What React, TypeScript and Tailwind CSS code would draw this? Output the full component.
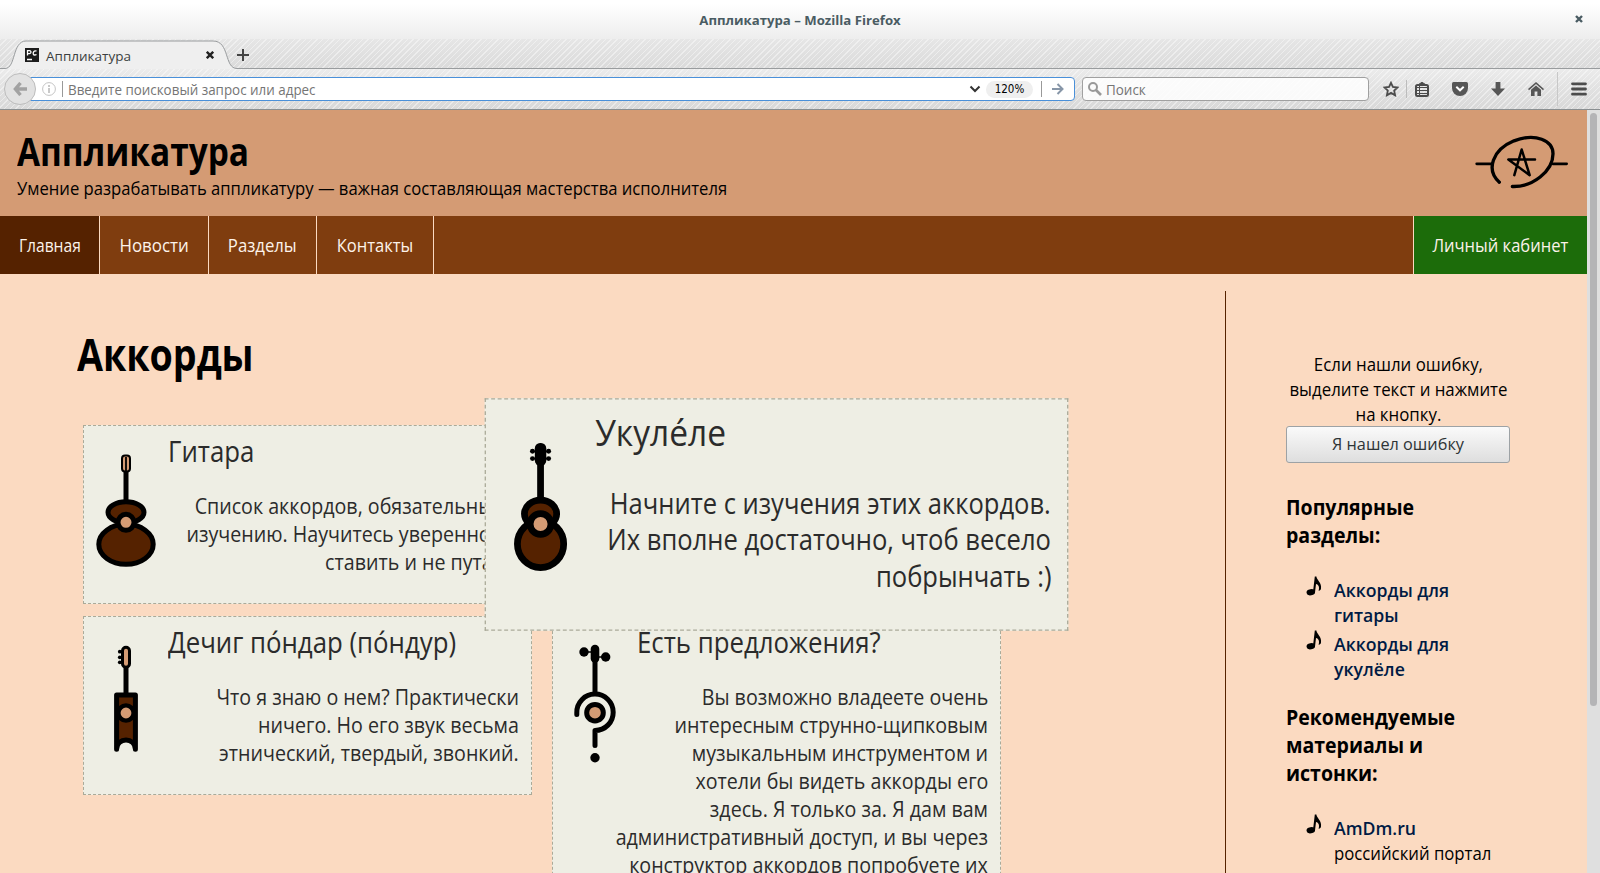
import type { ReactNode } from "react";

const BROWN = "#552200";
const TAN = "#d49b74";

function GuitarIcon() {
  return (
    <svg viewBox="0 0 84 177" className="h-[177px] w-[84px] shrink-0" stroke="#000" strokeWidth="5">
      <path d="M42 44V76" />
      <rect x="38" y="29.5" width="8" height="16" rx="3" fill={TAN} strokeWidth="2" />
      <path d="M42 31V45" strokeWidth="1.8" />
      <ellipse cx="42" cy="86.3" rx="18" ry="10.5" fill={BROWN} />
      <ellipse cx="42" cy="118.3" rx="27.2" ry="20" fill={BROWN} />
      <circle cx="42" cy="96.3" r="8" fill={TAN} />
    </svg>
  );
}

function UkuleleIcon() {
  return (
    <svg viewBox="0 0 84 177" className="h-[177px] w-[84px] shrink-0" stroke="#000" strokeWidth="5.2">
      <path d="M42 48V78" />
      <rect x="37.6" y="33.5" width="8.8" height="17.5" rx="4" stroke="none" />
      <path d="M36 39.9H48M36 45.5H48" strokeWidth="1.4" />
      <g stroke="none">
        <circle cx="35.8" cy="39.9" r="1.9" />
        <circle cx="48.2" cy="39.9" r="1.9" />
        <circle cx="35.8" cy="45.5" r="1.9" />
        <circle cx="48.2" cy="45.5" r="1.9" />
      </g>
      <ellipse cx="42" cy="88" rx="12.4" ry="10.6" fill={BROWN} />
      <ellipse cx="42" cy="111.2" rx="17.8" ry="18.1" fill={BROWN} />
      <circle cx="42" cy="95.8" r="8" fill={TAN} />
    </svg>
  );
}

function PondarIcon() {
  return (
    <svg viewBox="0 0 84 177" className="h-[177px] w-[84px] shrink-0" stroke="#000" strokeWidth="5">
      <path d="M42 50V78" />
      <rect x="38.5" y="30.2" width="7" height="20" rx="3.5" fill={TAN} strokeWidth="3" />
      <path d="M36 34.7H39M36 40.3H39M36 45.3H39" strokeWidth="1.4" />
      <g stroke="none">
        <circle cx="35.8" cy="34.7" r="1.9" />
        <circle cx="35.8" cy="40.3" r="1.9" />
        <circle cx="35.8" cy="45.3" r="1.9" />
      </g>
      <path
        d="M32.6 132.2V77.9H51.4V132.2C51.4 120 32.6 120 32.6 132.2Z"
        fill={BROWN}
        strokeLinejoin="round"
      />
      <circle cx="42" cy="96" r="7.6" fill={TAN} strokeWidth="4.4" />
    </svg>
  );
}

function QuestionIcon() {
  return (
    <svg viewBox="0 0 84 177" className="h-[177px] w-[84px] shrink-0" fill="none" stroke="#000" strokeWidth="5" strokeLinecap="round">
      <path d="M42 40V76" />
      <path d="M42 32V41.5" strokeWidth="8.6" />
      <path d="M31 35H42M42 40H53" strokeWidth="1.6" />
      <path d="M23.8 97.5V95.7A18.2 18.2 0 1 1 42 113.5V128.5" strokeLinejoin="round" />
      <circle cx="42" cy="95.7" r="8.3" fill={TAN} />
      <g stroke="none" fill="#000">
        <circle cx="31" cy="35" r="4.7" />
        <circle cx="52.7" cy="40" r="4.7" />
        <circle cx="42" cy="140.7" r="4.7" />
      </g>
    </svg>
  );
}

function NoteIcon() {
  return (
    <svg viewBox="0 0 16 20" className="-mt-px h-5 w-4 shrink-0">
      <ellipse cx="4.8" cy="16.2" rx="4.3" ry="3.1" transform="rotate(-10 4.8 16.2)" />
      <path d="M7 16 8.8.4H10.400C10.6 4 16 6.500 15 12.600 14.800 14 13.800 15 12.600 14.800 13.800 11 12.600 8.800 10 8L9 16.400Z" />
    </svg>
  );
}

type CardProps = { icon: ReactNode; title: string; lines: string[]; className?: string };

function Card({ icon, title, lines, className = "" }: CardProps) {
  return (
    <article
      className={`flex w-[449px] border border-dashed border-[#aaaa99] bg-[#eeeee4] text-[#2b2b2b] ${className}`}
    >
      {icon}
      <div className="flex min-w-0 grow flex-col pr-3 pt-[7px]">
        <h2 className="w-max origin-left scale-x-[.905] whitespace-nowrap text-[28.5px] leading-9">{title}</h2>
        <p className="mt-[23px] flex flex-col items-end text-[21.7px] leading-7">
          {lines.map((l) => (
            <span key={l} className="block w-max origin-right scale-x-[.906] whitespace-nowrap">
              {l}
            </span>
          ))}
        </p>
      </div>
    </article>
  );
}

function SideItem({ lines, note }: { lines: string[]; note?: string }) {
  return (
    <li className="flex gap-3">
      <NoteIcon />
      <div>
        {lines.map((l) => (
          <a key={l} className="block w-max origin-left scale-x-95 font-semibold text-[#001a44]">
            {l}
          </a>
        ))}
        {note && <span className="block w-max origin-left scale-x-90">{note}</span>}
      </div>
    </li>
  );
}

function SideHeading({ lines, className }: { lines: string[]; className: string }) {
  return (
    <h3 className={`text-[21.7px] font-bold leading-7 ${className}`}>
      {lines.map((l) => (
        <span key={l} className="block w-max origin-left scale-x-[.9]">
          {l}
        </span>
      ))}
    </h3>
  );
}

function Browser() {
  return (
    <header className="shrink-0 font-['Open_Sans',sans-serif]">
      <div className="relative flex h-[39px] items-center justify-center bg-linear-to-b from-white from-10% to-[#ededed] pt-0.5">
        <span className="text-[13.2px] font-bold text-[#4a5c63]">Аппликатура – Mozilla Firefox</span>
        <svg viewBox="0 0 8 8" className="absolute right-[17px] top-[15px] size-2" stroke="#4a5c63" strokeWidth="2.4">
          <path d="M1 1 7 7M7 1 1 7" />
        </svg>
      </div>
      <div className="bg-[repeating-linear-gradient(135deg,rgba(255,255,255,.42)_0_1px,transparent_1px_4px)]">
        <div className="relative h-[30px]">
          <div className="absolute inset-0 -z-10 bg-linear-to-b from-[#e6e6e6] to-[#dadada]" />
          <svg viewBox="0 0 1600 30" className="absolute inset-0 h-[30px] w-full" fill="none">
            <path
              d="M0 30V29.5H5C16 29.5 12 2 26 2H213C230 2 224 29.5 237 29.5H240V30Z"
              fill="#efefef"
            />
            <path
              d="M0 29.5H5C16 29.5 12 2 26 2H213C230 2 224 29.5 237 29.5H1600"
              stroke="#999c9e"
            />
          </svg>
          <div className="relative flex h-[30px] items-center pl-[25px] pt-0.5">
            <svg viewBox="0 0 14 14" className="size-3.5" fill="none" stroke="#fff" strokeWidth="1.3">
              <rect width="14" height="14" fill="#1c1c1c" stroke="none" />
              <path d="M2.500 7.500V2.600H4.500C6.500 2.600 6.500 5.600 4.500 5.600H2.500M11.500 3.200C8 1.500 7.200 7 9.500 7 10.500 7 11 6.900 11.500 6.500M2 11.500H7" />
            </svg>
            <span className="ml-[7px] w-[150px] pt-0.5 text-[13.5px] text-[#3c3f40]">Аппликатура</span>
            <svg viewBox="0 0 8 8" className="ml-[10px] size-2" stroke="#222" strokeWidth="2.4">
              <path d="M.8.8 7.200 7.200M7.200.8.8 7.200" />
            </svg>
            <svg viewBox="0 0 12 12" className="ml-[23px] size-3" stroke="#444" strokeWidth="2">
              <path d="M6 0V12M0 6H12" />
            </svg>
          </div>
        </div>
        <div className="relative flex h-[41px] items-center border-b border-[#8a8f91] pl-1">
          <div className="absolute inset-0 -z-10 bg-linear-to-b from-[#ebebeb] to-[#d8d8d8]" />
          <div className="relative z-10 flex size-8 items-center justify-center rounded-full border border-[#bdbdbd] bg-[#e2e2e2]">
            <svg viewBox="0 0 14 14" className="size-3.5" fill="none" stroke="#a2a2a2" strokeWidth="3.4">
              <path d="M7.500 1 2.400 7 7.500 13M2.500 7H14" />
            </svg>
          </div>
          <div className="-ml-2 flex h-6 w-[1047px] items-center rounded-r-sm border border-[#4a90d9] bg-white pl-[13px]">
            <svg viewBox="0 0 14 14" className="size-3.5" fill="none" stroke="#c4c4c4">
              <circle cx="7" cy="7" r="6.4" />
              <path d="M7 6V11M7 3V5" strokeWidth="1.8" />
            </svg>
            <i className="ml-[6px] h-4 w-px bg-[#999]" />
            <span className="ml-[5px] w-[901px] shrink-0 whitespace-nowrap">
              <span className="inline-block origin-left scale-x-[.957] pt-px text-[14px] text-[#757575]">
                Введите поисковый запрос или адрес
              </span>
            </span>
            <svg viewBox="0 0 12 8" className="h-2 w-3" fill="none" stroke="#333" strokeWidth="2">
              <path d="M1.500 1.500 6 6 10.500 1.500" />
            </svg>
            <span className="ml-[5px] flex h-[17px] w-[47px] items-center justify-center rounded-full bg-[#efefef] pt-px font-['DejaVu_Sans_Condensed','DejaVu_Sans',sans-serif] text-[11.5px] text-black">
              120%
            </span>
            <i className="ml-[8px] h-4 w-px bg-[#999]" />
            <svg viewBox="0 0 12 12" className="ml-[10px] size-3" fill="none" stroke="#8796a8" strokeWidth="2">
              <path d="M0 6H10M5.500 1 10.500 6 5.500 11" />
            </svg>
          </div>
          <div className="ml-[7px] flex h-6 w-[287px] items-center rounded-sm border border-[#a0a0a0] bg-white/85 pl-[5px]">
            <svg viewBox="0 0 14 14" className="size-3.5" fill="none" stroke="#999" strokeWidth="2">
              <circle cx="5" cy="5" r="4" />
              <path d="M8 8 13 13" strokeWidth="2.6" />
            </svg>
            <span className="ml-[4px] origin-left scale-x-[.96] pt-px text-[14px] text-[#757575]">Поиск</span>
          </div>
          <svg viewBox="0 0 16 16" className="ml-[14px] size-4" fill="none" stroke="#4c4c4c" strokeWidth="1.8">
            <path d="M8 1.800 9.900 5.900 14.500 6.500 11.200 9.600 12.100 14.300 8 11.900 3.900 14.300 4.800 9.600 1.500 6.500 6.100 5.900Z" />
          </svg>
          <i className="ml-[7px] h-[18px] w-px bg-[#bcbcbc]" />
          <svg viewBox="0 0 14 15" className="ml-2 h-[15px] w-3.5" fill="none" stroke="#4c4c4c">
            <rect x="1" y="3" width="12" height="11" rx="1.5" strokeWidth="2" />
            <path d="M3.500 2.500H10.500L7 .3Z" fill="#4c4c4c" />
            <path d="M2 5.500H12M2 8.500H12M2 11.500H12M4.500 4V13" />
          </svg>
          <svg viewBox="0 0 16 14" className="ml-[23px] h-3.5 w-4">
            <path d="M1.500 0H14.500Q16 0 16 1.500V6A8 8 0 0 1 0 6V1.500Q0 0 1.500 0Z" fill="#565656" />
            <path d="M4.300 4.800 8 8.300 11.700 4.800" fill="none" stroke="#fff" strokeWidth="2" />
          </svg>
          <svg viewBox="0 0 14 14" className="ml-[23px] size-3.5" fill="#565656">
            <path d="M4.600 0H9.400V6.500H14L7 14 0 6.500H4.600Z" />
          </svg>
          <svg viewBox="0 0 16 14" className="ml-[23px] h-3.5 w-4" fill="#565656">
            <path d="M0 7 8 0 16 7 15 8.200 8 2 1 8.200Z" />
            <path d="M3 7.800 8 3.400 13 7.800V14H9.400V9.500H6.600V14H3Z" />
          </svg>
          <i className="ml-[13px] h-[34px] w-px bg-[#c8c8c8]" />
          <svg viewBox="0 0 16 14" className="ml-[13px] h-3.5 w-4" stroke="#4c4c4c" strokeWidth="2.8" strokeLinecap="round">
            <path d="M1.500 1.800H14.500M1.500 7H14.500M1.500 12.200H14.500" />
          </svg>
        </div>
      </div>
    </header>
  );
}

const NAV = [
  { label: "Главная", cls: "w-[100px] bg-[#552200]", text: "scale-x-[.84]" },
  { label: "Новости", cls: "w-[109px]", text: "scale-x-[.91]" },
  { label: "Разделы", cls: "w-[108px]", text: "scale-x-[.9]" },
  { label: "Контакты", cls: "w-[117px]", text: "scale-x-[.89]" },
];

export default function App() {
  return (
    <div className="isolate flex h-[873px] w-[1600px] flex-col overflow-hidden">
      <Browser />
      <div className="flex min-h-0 grow bg-[#dfdfdf] font-['Open_Sans',sans-serif] text-[18.6px] leading-[25px] text-black">
        <div className="flex w-[1587px] flex-col overflow-hidden bg-[#fbdac1]">
          <div className="flex h-[106px] shrink-0 items-start justify-between bg-[#d49b74] pl-[17px] pr-[18px]">
            <div className="pt-4">
              <h1 className="w-max origin-left scale-x-[.857] text-[39px] font-bold leading-[50px]">Аппликатура</h1>
              <p className="-mt-px w-max origin-left scale-x-[.895]">
                Умение разрабатывать аппликатуру — важная составляющая мастерства исполнителя
              </p>
            </div>
            <svg viewBox="40 190 285 170" className="mt-[23px] h-[57px] w-[95px]" fill="none" stroke="#000" strokeLinecap="round" strokeLinejoin="round">
              <path d="M48 282H93M276 282H318" strokeWidth="8" />
              <path d="M116 337C75 300 95 240 160 213C225 188 277 212 277 252C277 305 215 352 155 350" strokeWidth="10" />
              <path d="M161 316 183 239 207 316 143 269H223" strokeWidth="7.5" />
            </svg>
          </div>
          <nav className="flex h-[58px] shrink-0 bg-[#7f3d0f] text-[#fdf3ea]">
            {NAV.map((n) => (
              <a key={n.label} className={`flex items-center justify-center border-r border-[#fbdac1] pb-0.5 ${n.cls}`}>
                <span className={n.text}>{n.label}</span>
              </a>
            ))}
            <a className="ml-auto flex w-[174px] items-center justify-center border-l border-[#fbdac1] bg-[#1c6c0a] pb-0.5">
              <span className="scale-x-[.89]">Личный кабинет</span>
            </a>
          </nav>
          <div className="flex min-h-0 grow">
            <main className="w-[1225px] shrink-0 pl-[77px] pt-[50px]">
              <h1 className="w-max origin-left scale-x-[.855] text-[44px] font-bold leading-[60px]">Аккорды</h1>
              <div className="ml-1.5 mt-[41px] grid w-max grid-cols-[449px_449px] items-start gap-x-5 gap-y-3">
                <Card
                  className="h-[179px]"
                  icon={<GuitarIcon />}
                  title="Гитара"
                  lines={["Список аккордов, обязательных к", "изучению. Научитесь уверенно их", "ставить и не путать."]}
                />
                <Card
                  className="relative z-10 h-[179px] scale-130"
                  icon={<UkuleleIcon />}
                  title="Укуле́ле"
                  lines={["Начните с изучения этих аккордов.", "Их вполне достаточно, чтоб весело", "побрынчать :)"]}
                />
                <Card
                  className="h-[179px]"
                  icon={<PondarIcon />}
                  title="Дечиг по́ндар (по́ндур)"
                  lines={["Что я знаю о нем? Практически", "ничего. Но его звук весьма", "этнический, твердый, звонкий."]}
                />
                <Card
                  className="h-[319px]"
                  icon={<QuestionIcon />}
                  title="Есть предложения?"
                  lines={[
                    "Вы возможно владеете очень",
                    "интересным струнно-щипковым",
                    "музыкальным инструментом и",
                    "хотели бы видеть аккорды его",
                    "здесь. Я только за. Я дам вам",
                    "административный доступ, и вы через",
                    "конструктор аккордов попробуете их",
                  ]}
                />
              </div>
            </main>
            <aside className="mt-[17px] grow border-l border-[#552200] pl-[60px] pt-[60px]">
              <div className="flex w-[224px] flex-col">
                <p className="flex flex-col items-center">
                  <span className="w-max scale-x-[.905]">Если нашли ошибку,</span>
                  <span className="w-max scale-x-[.905]">выделите текст и нажмите</span>
                  <span className="w-max scale-x-[.905]">на кнопку.</span>
                </p>
                <button className="h-[37px] rounded-[3px] border border-[#9da2a5] bg-linear-to-b from-[#fafafa] to-[#dedede] text-[16.3px] text-[#2e3436]">
                  Я нашел ошибку
                </button>
                <SideHeading className="mt-[30px]" lines={["Популярные", "разделы:"]} />
                <ul className="ml-5 mt-[28px] flex flex-col gap-1">
                  <SideItem lines={["Аккорды для", "гитары"]} />
                  <SideItem lines={["Аккорды для", "укулёле"]} />
                </ul>
                <SideHeading className="mt-[22px]" lines={["Рекомендуемые", "материалы и", "истонки:"]} />
                <ul className="ml-5 mt-7">
                  <SideItem lines={["AmDm.ru"]} note="российский портал" />
                </ul>
              </div>
            </aside>
          </div>
        </div>
        <div className="w-[13px] pl-[3px] pt-[3px]">
          <div className="h-[593px] w-[7px] rounded-full bg-[#b4b4b6]" />
        </div>
      </div>
    </div>
  );
}
